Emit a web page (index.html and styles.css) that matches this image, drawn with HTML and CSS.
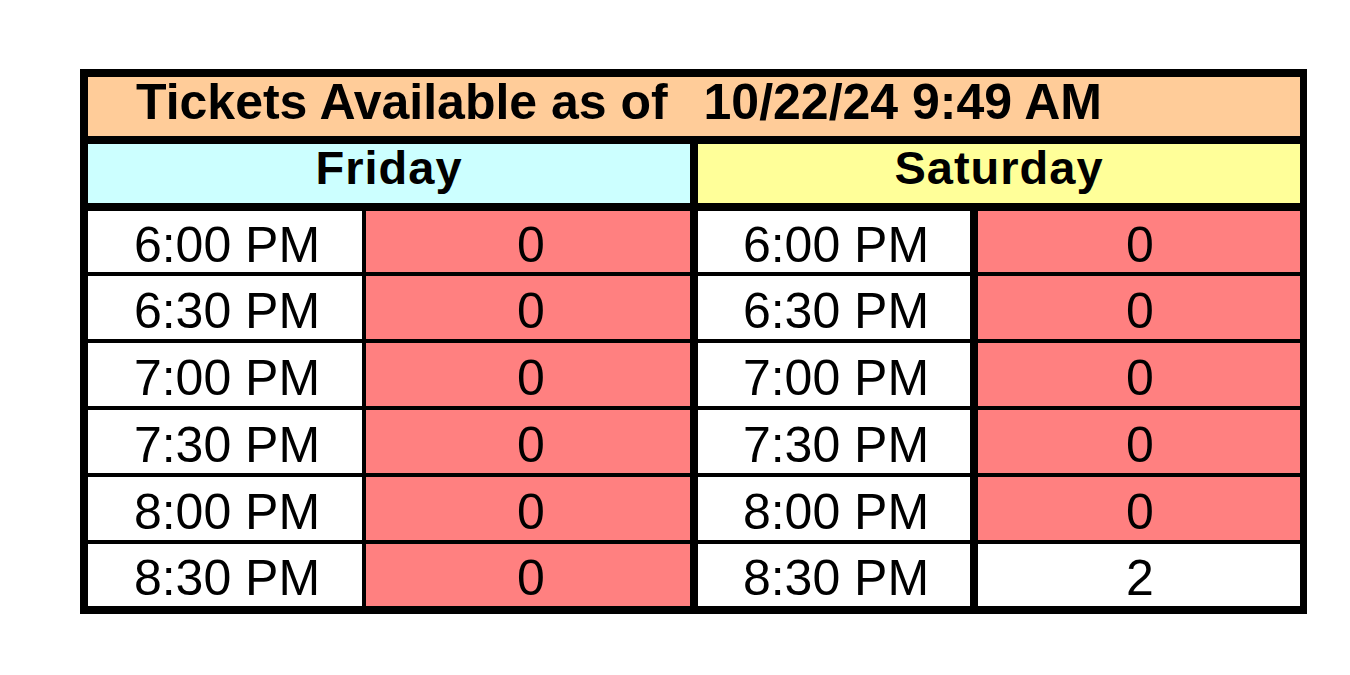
FILE: index.html
```html
<!DOCTYPE html>
<html lang="en">
<head>
<meta charset="utf-8">
<title>Tickets Available</title>
<link rel="stylesheet" href="styles.css">
</head>
<body>
<div class="sheet">
  <div class="title">Tickets Available as of  <span class="stamp">10/22/24 9:49 AM</span></div>
  <div class="days">
    <div class="day fri">Friday</div>
    <div class="day sat">Saturday</div>
  </div>
  <div class="grid">
    <div class="cell c1">6:00 PM</div><div class="cell c2 red">0</div><div class="cell c3">6:00 PM</div><div class="cell c4 red">0</div>
    <div class="cell c1">6:30 PM</div><div class="cell c2 red">0</div><div class="cell c3">6:30 PM</div><div class="cell c4 red">0</div>
    <div class="cell c1">7:00 PM</div><div class="cell c2 red">0</div><div class="cell c3">7:00 PM</div><div class="cell c4 red">0</div>
    <div class="cell c1">7:30 PM</div><div class="cell c2 red">0</div><div class="cell c3">7:30 PM</div><div class="cell c4 red">0</div>
    <div class="cell c1">8:00 PM</div><div class="cell c2 red">0</div><div class="cell c3">8:00 PM</div><div class="cell c4 red">0</div>
    <div class="cell c1 last">8:30 PM</div><div class="cell c2 red last">0</div><div class="cell c3 last">8:30 PM</div><div class="cell c4 last">2</div>
  </div>
</div>
</body>
</html>
```
FILE: styles.css
```css
html, body {
  margin: 0;
  padding: 0;
  background: #ffffff;
}
body {
  font-family: "Liberation Sans", Arial, sans-serif;
  color: #000000;
}
.sheet {
  margin: 69px 0 0 80px;
  width: 1212px;
  border: 8px solid #000000;
  border-right-width: 7px;
}
.title {
  box-sizing: border-box;
  background: #ffcc99;
  border-bottom: 8px solid #000000;
  height: 67px;
  padding: 0 0 10px 48px;
  display: flex;
  align-items: center;
  font-weight: bold;
  font-size: 50px;
  line-height: 1;
  white-space: pre;
}
.stamp {
  margin-left: 8px;
}
.days {
  display: grid;
  grid-template-columns: 602px 610px;
  border-bottom: 8px solid #000000;
}
.day {
  height: 59px;
  box-sizing: border-box;
  display: flex;
  align-items: center;
  justify-content: center;
  font-weight: bold;
  font-size: 47px;
  letter-spacing: 1px;
  line-height: 1;
  padding-bottom: 12px;
}
.fri {
  background: #ccffff;
}
.sat {
  background: #ffff99;
  border-left: 8px solid #000000;
}
.grid {
  display: grid;
  grid-template-columns: 278px 332px 280px 322px;
  grid-template-rows: 65px 67px 67px 67px 67px 62px;
}
.cell {
  box-sizing: border-box;
  display: flex;
  align-items: center;
  justify-content: center;
  font-size: 50px;
  line-height: 1;
  padding-top: 6px;
  background: #ffffff;
  border-bottom: 4px solid #000000;
}
.cell.last {
  border-bottom: none;
}
.c1 {
  border-right: 4px solid #000000;
  padding-left: 4px;
}
.c2 {
  border-right: 8px solid #000000;
  padding-left: 6px;
}
.c3 {
  border-right: 8px solid #000000;
  padding-left: 4px;
}
.c4 {
  padding-left: 2px;
}
.red {
  background: #ff8080;
}
```
